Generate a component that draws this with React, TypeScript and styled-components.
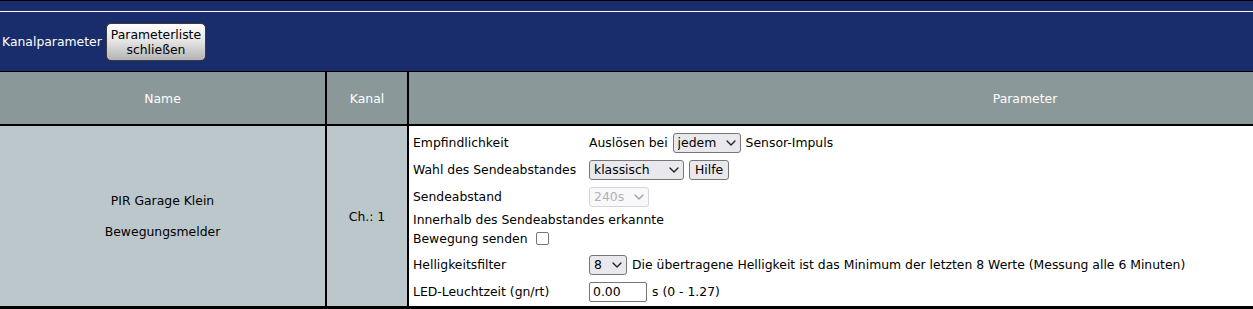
import React from 'react';
import styled, { createGlobalStyle } from 'styled-components';
import { ChevronDown } from 'lucide-react';

const GlobalStyle = createGlobalStyle`
  html, body {
    margin: 0;
    padding: 0;
    overflow: hidden;
    background: #ffffff;
  }
  body {
    font-family: "DejaVu Sans", Verdana, sans-serif;
    font-size: 12.4px;
    color: #000000;
  }
`;

// the list is wider than the window; clip it the way the browser viewport does
const Viewport = styled.div`
  width: 100vw;
  overflow: hidden;
`;

const Page = styled.div`
  width: 1641px;
`;

const TopStrip = styled.div`
  height: 10px;
  border-top: 1px solid #000000;
  border-bottom: 1px solid #ffffff;
  background: #192c6b;
`;

const TitleBar = styled.div`
  height: 59px;
  display: flex;
  align-items: center;
  gap: 4px;
  padding-left: 2px;
  background: #192c6b;
`;

const TitleText = styled.span`
  color: #ffffff;
`;

const CloseButton = styled.button`
  font: inherit;
  line-height: 15px;
  color: #000000;
  padding: 3px 4px;
  border: 1px solid #3a3a3a;
  border-radius: 5px;
  background: linear-gradient(to bottom, #ffffff 0%, #e6e6e6 45%, #b4b4b4 100%);
  cursor: pointer;
`;

const Table = styled.div`
  display: grid;
  grid-template-columns: 325px 80px 1232px;
  grid-template-rows: 52px 180px;
  gap: 2px;
  background: #000000;
  border-top: 1px solid #000000;
  border-bottom: 3px solid #000000;
`;

const HeadCell = styled.div`
  display: flex;
  align-items: center;
  justify-content: center;
  background: #8a9899;
  color: #ffffff;
`;

const InfoCell = styled.div`
  display: flex;
  flex-direction: column;
  align-items: center;
  justify-content: center;
  gap: 16px;
  background: #bcc7cb;
  line-height: 15px;
`;

const ParamCell = styled.div`
  background: #ffffff;
  padding: 3px 4px 1px;
`;

const ParamRow = styled.div`
  display: grid;
  grid-template-columns: 176px 1fr;
  align-items: center;
  height: 27px;
`;

const WideRow = styled.div`
  padding: 2px 0 3px;
`;

const Line = styled.div`
  line-height: 16px;
`;

const CheckLine = styled.div`
  display: flex;
  align-items: center;
  gap: 8px;
  height: 20px;
`;

const Value = styled.div`
  display: flex;
  align-items: center;
  gap: 5px;
`;

const SelectWrap = styled.span`
  position: relative;
  display: inline-flex;
`;

const Select = styled.select<{ $w: number }>`
  appearance: none;
  width: ${({ $w }) => $w}px;
  height: 20px;
  padding: 0 0 0 4px;
  font: inherit;
  color: #000000;
  border: 1px solid #767676;
  border-radius: 3px;
  background: #e9e9ed;

  &:disabled {
    color: #8f8f94;
    border-color: #c4c4c8;
    background: #f6f6f8;
  }
`;

const Chevron = styled(ChevronDown)<{ $off?: boolean }>`
  position: absolute;
  right: 2px;
  top: 2px;
  pointer-events: none;
  color: ${({ $off }) => ($off ? '#a0a0a6' : '#222222')};
`;

const SmallButton = styled.button`
  height: 20px;
  padding: 0 5px;
  font: inherit;
  color: #000000;
  border: 1px solid #767676;
  border-radius: 3px;
  background: #e9e9ed;
`;

const TextInput = styled.input`
  width: 58px;
  height: 20px;
  box-sizing: border-box;
  padding: 0 3px;
  font: inherit;
  color: #000000;
  border: 1px solid #767676;
  border-radius: 2px;
`;

const Check = styled.input`
  appearance: none;
  width: 13px;
  height: 13px;
  margin: 0;
  border: 1px solid #767676;
  border-radius: 2px;
  background: #ffffff;
`;

type DropProps = { width: number; value: string; options: string[]; disabled?: boolean };

const Drop = ({ width, value, options, disabled }: DropProps) => (
  <SelectWrap>
    <Select $w={width} defaultValue={value} disabled={disabled}>
      {options.map((o) => (
        <option key={o}>{o}</option>
      ))}
    </Select>
    <Chevron size={16} strokeWidth={2} $off={disabled} />
  </SelectWrap>
);

export default function App() {
  return (
    <>
      <GlobalStyle />
      <Viewport>
        <Page>
          <TopStrip />
          <TitleBar>
            <TitleText>Kanalparameter</TitleText>
            <CloseButton>
              Parameterliste
              <br />
              schließen
            </CloseButton>
          </TitleBar>

          <Table>
            <HeadCell>Name</HeadCell>
            <HeadCell>Kanal</HeadCell>
            <HeadCell>Parameter</HeadCell>

            <InfoCell>
              <span>PIR Garage Klein</span>
              <span>Bewegungsmelder</span>
            </InfoCell>
            <InfoCell>Ch.: 1</InfoCell>

            <ParamCell>
              <ParamRow>
                <span>Empfindlichkeit</span>
                <Value>
                  <span>Auslösen bei</span>
                  <Drop width={68} value="jedem" options={['jedem', 'jedem 2.', 'jedem 4.']} />
                  <span>Sensor-Impuls</span>
                </Value>
              </ParamRow>
              <ParamRow>
                <span>Wahl des Sendeabstandes</span>
                <Value>
                  <Drop width={95} value="klassisch" options={['klassisch', 'dynamisch']} />
                  <SmallButton>Hilfe</SmallButton>
                </Value>
              </ParamRow>
              <ParamRow>
                <span>Sendeabstand</span>
                <Value>
                  <Drop width={60} value="240s" options={['240s']} disabled />
                </Value>
              </ParamRow>
              <WideRow>
                <Line>Innerhalb des Sendeabstandes erkannte</Line>
                <CheckLine>
                  <span>Bewegung senden</span>
                  <Check type="checkbox" />
                </CheckLine>
              </WideRow>
              <ParamRow>
                <span>Helligkeitsfilter</span>
                <Value>
                  <Drop width={38} value="8" options={['1', '2', '4', '8']} />
                  <span>Die übertragene Helligkeit ist das Minimum der letzten 8 Werte (Messung alle 6 Minuten)</span>
                </Value>
              </ParamRow>
              <ParamRow>
                <span>LED-Leuchtzeit (gn/rt)</span>
                <Value>
                  <TextInput type="text" defaultValue="0.00" />
                  <span>s (0 - 1.27)</span>
                </Value>
              </ParamRow>
            </ParamCell>
          </Table>
        </Page>
      </Viewport>
    </>
  );
}
